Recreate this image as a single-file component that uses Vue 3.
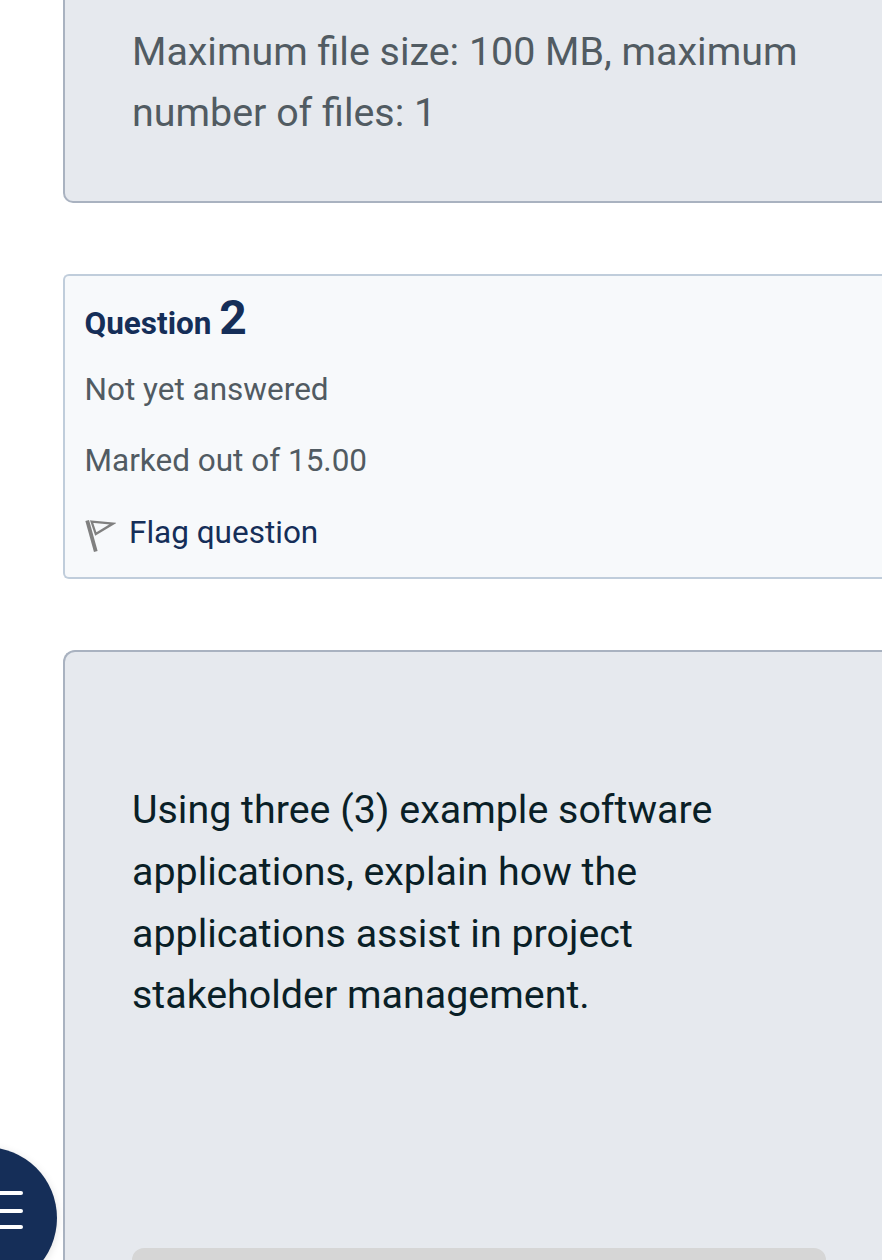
<script setup>
const meta = ['Not yet answered', 'Marked out of 15.00']
const questionLines = [
  'Using three (3) example software',
  'applications, explain how the',
  'applications assist in project',
  'stakeholder management.'
]
</script>

<template>
  <div class="page">
    <div class="attempt-box file-box">
      <p class="file-note">Maximum file size: 100 MB, maximum</p>
      <p class="file-note">number of files: 1</p>
    </div>

    <div class="info-box">
      <h3 class="qno">Question <span>2</span></h3>
      <p v-for="item in meta" :key="item" class="meta">{{ item }}</p>
      <div class="flag">
        <svg width="32" height="36" viewBox="0 0 32 36" fill="none">
          <path d="M3.2 3.5 L11.8 34.4" stroke="#808080" stroke-width="3.8" />
          <path d="M7.6 4.6 L29 6.6 L11.8 17 Z" stroke="#808080" stroke-width="2.3" />
        </svg>
        <span>Flag question</span>
      </div>
    </div>

    <div class="attempt-box question-box">
      <p v-for="line in questionLines" :key="line" class="question-text">{{ line }}</p>
      <div class="editor-bar"></div>
    </div>

    <button class="fab" aria-label="Menu">
      <i></i><i></i><i></i>
    </button>
  </div>
</template>

<style>
html, body {
  margin: 0;
  overflow: hidden;
}
</style>

<style scoped>
.page {
  position: relative;
  width: 882px;
  height: 1260px;
  overflow: hidden;
  background: #fff;
  font-family: Roboto, "Liberation Sans", sans-serif;
  padding-left: 63px;
  box-sizing: border-box;
}
p {
  margin: 0;
}
.attempt-box {
  width: 860px;
  box-sizing: border-box;
  background: #e6e9ee;
  border: 2px solid #a9b2c0;
  border-right: none;
  padding-left: 67px;
}
.file-box {
  height: 203px;
  border-top: none;
  border-radius: 0 0 0 10px;
  padding-top: 21px;
}
.file-note {
  font-size: 39.4px;
  line-height: 61px;
  color: #515b62;
}
.info-box {
  width: 860px;
  height: 305px;
  margin-top: 71px;
  box-sizing: border-box;
  background: #f7f9fb;
  border: 2px solid #c0cddb;
  border-right: none;
  border-radius: 6px 0 0 6px;
  padding: 13px 0 0 19.5px;
}
.qno {
  margin: 0;
  font-size: 31.5px;
  line-height: 58px;
  font-weight: 700;
  color: #152e58;
}
.qno span {
  font-size: 48px;
  font-weight: 700;
}
.meta {
  font-size: 31.5px;
  line-height: 71px;
  color: #515b62;
}
.meta:first-of-type {
  margin-top: 1px;
}
.flag {
  display: flex;
  align-items: center;
  gap: 13px;
  margin-top: 1px;
  margin-left: -0.5px;
  font-size: 31.5px;
  line-height: 71px;
  color: #152e58;
}
.flag svg {
  flex: none;
  margin-top: 4px;
}
.question-box {
  height: 640px;
  margin-top: 71px;
  border-right: none;
  border-bottom: none;
  border-radius: 12px 0 0 0;
  padding-top: 127px;
}
.question-text {
  font-size: 39.4px;
  line-height: 61.8px;
  color: #0a1f27;
}
.editor-bar {
  width: 694px;
  height: 40px;
  margin-top: 222px;
  background: #d6d6d6;
  border-radius: 12px 12px 0 0;
}
.fab {
  position: absolute;
  left: -85px;
  top: 1147px;
  width: 142px;
  height: 142px;
  padding: 0;
  border: none;
  border-radius: 50%;
  background: #152e58;
  box-shadow: 0 2px 8px rgba(0, 0, 0, 0.12);
}
.fab i {
  position: absolute;
  left: 79px;
  width: 29px;
  height: 4px;
  border-radius: 2px;
  background: #fff;
}
.fab i:nth-child(1) { top: 44px; }
.fab i:nth-child(2) { top: 62px; }
.fab i:nth-child(3) { top: 78px; }
</style>
